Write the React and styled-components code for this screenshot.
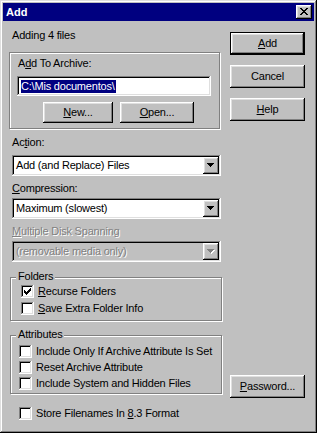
import React from "react";
import styled, { createGlobalStyle, css } from "styled-components";

const Global = createGlobalStyle`
  html, body { margin: 0; padding: 0; background: #c0c0c0; }
  body {
    font-family: "Liberation Sans", Arial, sans-serif;
    font-size: 11px;
    letter-spacing: -0.2px;
    color: #000;
  }
  * { box-sizing: border-box; }
  u { text-decoration-thickness: 1px; text-underline-offset: 1px; }
`;

const raised = css`
  box-shadow: inset -1px -1px #000, inset 1px 1px #fff, inset -2px -2px #808080,
    inset 2px 2px #dfdfdf;
`;
const sunken = css`
  box-shadow: inset -1px -1px #fff, inset 1px 1px #808080, inset -2px -2px #dfdfdf,
    inset 2px 2px #000;
`;

const Window = styled.div`
  width: 317px;
  height: 433px;
  padding: 3px;
  background: #c0c0c0;
  display: flex;
  flex-direction: column;
  box-shadow: inset -1px -1px #000, inset 1px 1px #dfdfdf, inset -2px -2px #808080,
    inset 2px 2px #fff;
`;

const TitleBar = styled.div`
  height: 18px;
  background: #000080;
  display: flex;
  align-items: center;
  justify-content: space-between;
  padding: 0 2px 0 3px;
`;

const Title = styled.span`
  color: #fff;
  font-weight: bold;
  font-size: 11px;
  letter-spacing: 0;
  line-height: 13px;
`;

const CloseButton = styled.div`
  width: 16px;
  height: 14px;
  background: #c0c0c0;
  ${raised};
  display: flex;
  align-items: center;
  justify-content: center;
  padding: 0 1px 1px 0;
  svg { display: block; }
`;

const Body = styled.div`
  flex: 1;
  display: flex;
  padding: 0 9px 0 6px;
`;

const LeftCol = styled.div`
  width: 213px;
  margin-right: 8px;
  display: flex;
  flex-direction: column;
  padding-top: 8px;
`;

const RightCol = styled.div`
  width: 75px;
  display: flex;
  flex-direction: column;
  gap: 10px;
  padding: 11px 0 32px;
`;

const Text = styled.div`
  line-height: 13px;
  height: 13px;
  white-space: nowrap;
  padding-left: ${(p) => p.$indent ?? 3}px;
  margin-top: ${(p) => p.$mt ?? 0}px;
  color: ${(p) => (p.$disabled ? "#808080" : "#000")};
  text-shadow: ${(p) => (p.$disabled ? "1px 1px 0 #fff" : "none")};
`;

const Group = styled.div`
  position: relative;
  width: ${(p) => p.$w}px;
  margin-left: ${(p) => p.$ml ?? 0}px;
  margin-top: ${(p) => p.$mt ?? 0}px;
  border: 1px solid #808080;
  box-shadow: inset 1px 1px #fff, 1px 1px #fff;
  padding: ${(p) => p.$pad};
  display: flex;
  flex-direction: column;
`;

const Legend = styled.span`
  position: absolute;
  top: -8px;
  left: 5px;
  padding: 0 2px;
  line-height: 13px;
  background: #c0c0c0;
`;

const Field = styled.div`
  width: 194px;
  height: 20px;
  margin: 6px 0 0 7px;
  background: #fff;
  ${sunken};
  display: flex;
  align-items: center;
  padding-left: 4px;
`;

const Selection = styled.span`
  background: #000080;
  color: #fff;
  line-height: 13px;
  padding: 0 1px 0 0;
`;

const ButtonRow = styled.div`
  display: flex;
  gap: 7px;
  margin: 6px 0 0 33px;
`;

const Button = styled.div`
  width: ${(p) => p.$w ?? 75}px;
  height: ${(p) => p.$h ?? 23}px;
  background: #c0c0c0;
  display: flex;
  align-items: center;
  justify-content: center;
  line-height: 13px;
  white-space: nowrap;
  ${(p) =>
    p.$default
      ? css`
          box-shadow: inset 0 0 0 1px #000, inset -2px -2px #000, inset 2px 2px #fff,
            inset -3px -3px #808080, inset 3px 3px #dfdfdf;
        `
      : raised};
  margin-top: ${(p) => (p.$pushDown ? "auto" : "0")};
`;

const Combo = styled.div`
  width: 209px;
  height: 21px;
  margin: ${(p) => p.$mt}px 0 0 3px;
  background: ${(p) => (p.$disabled ? "#c0c0c0" : "#fff")};
  ${sunken};
  display: flex;
  align-items: center;
  padding: 2px;
`;

const ComboText = styled.span`
  flex: 1;
  padding-left: 2px;
  line-height: 13px;
  white-space: nowrap;
  color: ${(p) => (p.$disabled ? "#808080" : "#000")};
  text-shadow: ${(p) => (p.$disabled ? "1px 1px 0 #fff" : "none")};
`;

const ComboButton = styled.div`
  width: 16px;
  height: 17px;
  background: #c0c0c0;
  ${raised};
  display: flex;
  align-items: center;
  justify-content: center;
  padding: 0 1px 1px 0;
  svg { display: block; }
`;

const CheckRow = styled.div`
  display: flex;
  align-items: flex-start;
  height: ${(p) => p.$h}px;
  padding-left: ${(p) => p.$indent}px;
  margin-top: ${(p) => p.$mt ?? 0}px;
`;

const Box = styled.div`
  width: 13px;
  height: 13px;
  margin-top: ${(p) => p.$top}px;
  background: #fff;
  ${sunken};
  display: flex;
  align-items: center;
  justify-content: center;
  flex-shrink: 0;
  svg { display: block; }
`;

const CheckLabel = styled.span`
  margin-left: 4px;
  line-height: 13px;
  margin-top: ${(p) => p.$top}px;
  white-space: nowrap;
`;

const px = { shapeRendering: "crispEdges" };

const CloseIcon = () => (
  <svg width="8" height="7" viewBox="0 0 8 7" style={px}>
    <path
      fill="#000"
      d="M0 0h2v1h-2zM6 0h2v1h-2zM1 1h2v1h-2zM5 1h2v1h-2zM2 2h4v1h-4zM3 3h2v1h-2zM2 4h4v1h-4zM1 5h2v1h-2zM5 5h2v1h-2zM0 6h2v1h-2zM6 6h2v1h-2z"
    />
  </svg>
);

const Arrow = ({ disabled }) => (
  <svg width="8" height="5" viewBox="0 0 8 5" style={px}>
    {disabled && <path fill="#fff" d="M1 1h7v1h-7zM2 2h5v1h-5zM3 3h3v1h-3zM4 4h1v1h-1z" />}
    <path
      fill={disabled ? "#808080" : "#000"}
      d="M0 0h7v1h-7zM1 1h5v1h-5zM2 2h3v1h-3zM3 3h1v1h-1z"
    />
  </svg>
);

const CheckMark = () => (
  <svg width="7" height="7" viewBox="0 0 7 7" style={px}>
    <path
      fill="#000"
      d="M6 0h1v1h-1zM5 1h2v1h-2zM0 2h1v1h-1zM4 2h3v1h-3zM0 3h2v1h-2zM3 3h3v1h-3zM0 4h5v1h-5zM1 5h3v1h-3zM2 6h1v1h-1z"
    />
  </svg>
);

const Check = ({ checked, children, h, indent, top = 2, mt }) => (
  <CheckRow $h={h} $indent={indent} $mt={mt}>
    <Box $top={top}>{checked && <CheckMark />}</Box>
    <CheckLabel $top={top}>{children}</CheckLabel>
  </CheckRow>
);

const Dropdown = ({ value, disabled, mt }) => (
  <Combo $mt={mt} $disabled={disabled}>
    <ComboText $disabled={disabled}>{value}</ComboText>
    <ComboButton>
      <Arrow disabled={disabled} />
    </ComboButton>
  </Combo>
);

export default function App() {
  return (
    <>
      <Global />
      <Window>
        <TitleBar>
          <Title>Add</Title>
          <CloseButton>
            <CloseIcon />
          </CloseButton>
        </TitleBar>
        <Body>
          <LeftCol>
            <Text>Adding 4 files</Text>
            <Group $w={211} $mt={10} $pad="4px 0 5px 0">
              <Text $indent={8}>
                A<u>d</u>d To Archive:
              </Text>
              <Field>
                <Selection>C:\Mis documentos\</Selection>
              </Field>
              <ButtonRow>
                <Button $w={70} $h={21}>
                  <span>
                    <u>N</u>ew...
                  </span>
                </Button>
                <Button $w={74} $h={21}>
                  <span>
                    <u>O</u>pen...
                  </span>
                </Button>
              </ButtonRow>
            </Group>

            <Text $mt={7}>
              Ac<u>t</u>ion:
            </Text>
            <Dropdown mt={6} value="Add (and Replace) Files" />
            <Text $mt={6}>
              <u>C</u>ompression:
            </Text>
            <Dropdown mt={3} value="Maximum (slowest)" />
            <Text $mt={6} $disabled>
              <u>M</u>ultiple Disk Spanning
            </Text>
            <Dropdown mt={3} value="(removable media only)" disabled />

            <Group $w={212} $ml={1} $mt={15} $pad="5px 0 3px 0">
              <Legend>Folders</Legend>
              <Check h={17} indent={10} checked>
                <u>R</u>ecurse Folders
              </Check>
              <Check h={17} indent={10}>
                <u>S</u>ave Extra Folder Info
              </Check>
            </Group>

            <Group $w={212} $ml={1} $mt={14} $pad="8px 0 1px 0">
              <Legend>Attributes</Legend>
              <Check h={16} indent={8} top={1}>
                Include Only If Archive Attribute Is Set
              </Check>
              <Check h={16} indent={8} top={1}>
                Reset Archive Attribute
              </Check>
              <Check h={16} indent={8} top={1}>
                Include System and Hidden Files
              </Check>
            </Group>

            <Check h={16} indent={10} mt={11}>
              Store Filenames In <u>8</u>.3 Format
            </Check>
          </LeftCol>

          <RightCol>
            <Button $default>
              <span>
                <u>A</u>dd
              </span>
            </Button>
            <Button>Cancel</Button>
            <Button>
              <span>
                <u>H</u>elp
              </span>
            </Button>
            <Button $pushDown>
              <span>
                <u>P</u>assword...
              </span>
            </Button>
          </RightCol>
        </Body>
      </Window>
    </>
  );
}
